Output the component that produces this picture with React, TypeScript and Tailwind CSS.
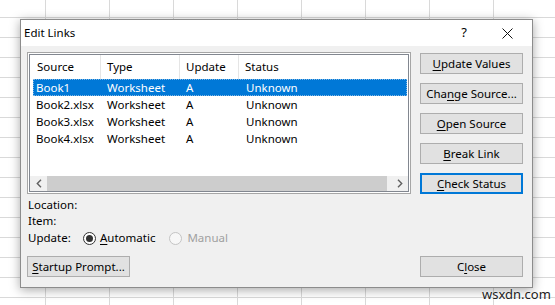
import React from "react";

const font = { fontFamily: '"Noto Sans", "Open Sans", sans-serif' };

function Btn({ children, focus = false }: { children: React.ReactNode; focus?: boolean }) {
  return (
    <div
      className={
        "w-[103px] h-[21px] flex items-center justify-center text-[11.5px] text-black bg-[#e1e1e1] " +
        (focus ? "border-2 border-[#0078d7]" : "border border-[#adadad]")
      }
    >
      {children}
    </div>
  );
}

function Chevron({ dir }: { dir: "l" | "r" }) {
  return (
    <svg width="6" height="9" viewBox="0 0 6 9">
      {dir === "l" ? (
        <path d="M5 0.8 L1.3 4.5 L5 8.2" fill="none" stroke="#606060" strokeWidth="1.4" />
      ) : (
        <path d="M1 0.8 L4.7 4.5 L1 8.2" fill="none" stroke="#606060" strokeWidth="1.4" />
      )}
    </svg>
  );
}

const rows = [
  ["Book1", "Worksheet", "A", "Unknown"],
  ["Book2.xlsx", "Worksheet", "A", "Unknown"],
  ["Book3.xlsx", "Worksheet", "A", "Unknown"],
  ["Book4.xlsx", "Worksheet", "A", "Unknown"],
];

export default function App() {
  return (
    <div
      style={font}
      className="relative w-[555px] h-[305px] overflow-hidden bg-white bg-[linear-gradient(to_right,#d9d9d9_1px,transparent_1px),linear-gradient(to_bottom,#d9d9d9_1px,transparent_1px)] bg-[size:64px_20px] bg-[position:45px_17px]"
    >
      {/* Dialog window */}
      <div className="absolute left-[20px] top-[19px] w-[513px] h-[269px] flex flex-col border border-[#8c8c8c] bg-[#f0f0f0] shadow-[0_2px_10px_rgba(0,0,0,0.35)]">
        {/* Title bar */}
        <div className="h-[26px] bg-white flex items-center pl-[3px] text-[11.5px] text-black">
          <span className="flex-1">Edit Links</span>
          <span className="w-[12px] text-center text-[13px] mr-[32px]">?</span>
          <svg width="11" height="11" viewBox="0 0 11 11" className="mr-[19px]">
            <path d="M0.5 0.5 L10.5 10.5 M10.5 0.5 L0.5 10.5" stroke="#111" strokeWidth="1" />
          </svg>
        </div>

        {/* Body */}
        <div className="flex-1 flex flex-col pt-[6px] pl-[6px] text-[11.5px] text-black">
          <div className="flex">
            {/* Left column */}
            <div className="w-[384px] flex flex-col">
              {/* List box */}
              <div className="w-[384px] border border-[#a6a6a6] bg-white p-[1px]">
                <div className="h-[138px] border border-[#828790] flex flex-col">
                  {/* header */}
                  <div className="h-[24px] flex items-center">
                    <div className="w-[71px] h-full pl-[7px] flex items-center border-r border-[#e5e5e5]">Source</div>
                    <div className="w-[79px] h-full pl-[6px] flex items-center border-r border-[#e5e5e5]">Type</div>
                    <div className="w-[59px] h-full pl-[6px] flex items-center border-r border-[#e5e5e5]">Update</div>
                    <div className="flex-1 h-full pl-[6px] flex items-center">Status</div>
                  </div>
                  {rows.map((r, i) => (
                    <div
                      key={i}
                      className={
                        "h-[17px] ml-[3px] mr-[1px] flex items-center " +
                        (i === 0 ? "bg-[#0078d7] text-white outline-1 outline-dotted outline-[#7fb6e4] -outline-offset-1" : "")
                      }
                    >
                      <div className="w-[68px] pl-[3px]">{r[0]}</div>
                      <div className="w-[79px] pl-[6px]">{r[1]}</div>
                      <div className="w-[59px] pl-[6px]">{r[2]}</div>
                      <div className="flex-1 pl-[7px]">{r[3]}</div>
                    </div>
                  ))}
                  <div className="flex-1" />
                  {/* horizontal scrollbar */}
                  <div className="h-[15px] bg-[#f0f0f0] flex items-center">
                    <div className="w-[17px] h-full flex items-center justify-center">
                      <Chevron dir="l" />
                    </div>
                    <div className="w-[340px] h-full bg-[#cdcdcd]" />
                    <div className="flex-1" />
                    <div className="w-[17px] h-full flex items-center justify-center">
                      <Chevron dir="r" />
                    </div>
                  </div>
                </div>
              </div>

              {/* Info labels */}
              <div className="pl-[1px] mt-[3px] flex flex-col">
                <div className="h-[16px] flex items-center">Location:</div>
                <div className="h-[16px] flex items-center">Item:</div>
                <div className="h-[18px] flex items-center">
                  <span className="w-[55px]">Update:</span>
                  <span className="w-[13px] h-[13px] rounded-full border border-[#333] bg-white flex items-center justify-center">
                    <span className="w-[7px] h-[7px] rounded-full bg-[#333]" />
                  </span>
                  <span className="ml-[4px]">
                    <span className="underline underline-offset-2">A</span>utomatic
                  </span>
                  <span className="ml-[14px] w-[13px] h-[13px] rounded-full border border-[#c4c4c4] bg-[#f7f7f7]" />
                  <span className="ml-[5px] text-[#a0a0a0]">Manual</span>
                </div>
              </div>
            </div>

            {/* Right buttons */}
            <div className="ml-[9px] mt-[1px] flex flex-col gap-[9px]">
              <Btn>
                <span className="underline underline-offset-2">U</span>pdate Values
              </Btn>
              <Btn>
                Cha<span className="underline underline-offset-2">n</span>ge Source...
              </Btn>
              <Btn>
                <span className="underline underline-offset-2">O</span>pen Source
              </Btn>
              <Btn>
                <span className="underline underline-offset-2">B</span>reak Link
              </Btn>
              <Btn focus>
                <span className="underline underline-offset-2">C</span>heck Status
              </Btn>
            </div>
          </div>

          {/* Bottom buttons */}
          <div className="mt-[9px] flex">
            <Btn>
              <span className="underline underline-offset-2">S</span>tartup Prompt...
            </Btn>
            <div className="ml-[290px]">
              <Btn>
                C<span className="underline underline-offset-2">l</span>ose
              </Btn>
            </div>
          </div>
        </div>
      </div>

      {/* watermark */}
      <div className="absolute left-[482px] top-[285px] text-[13px] text-[#222] [text-shadow:0_0_2px_#fff]">
        wsxdn.com
      </div>
    </div>
  );
}
